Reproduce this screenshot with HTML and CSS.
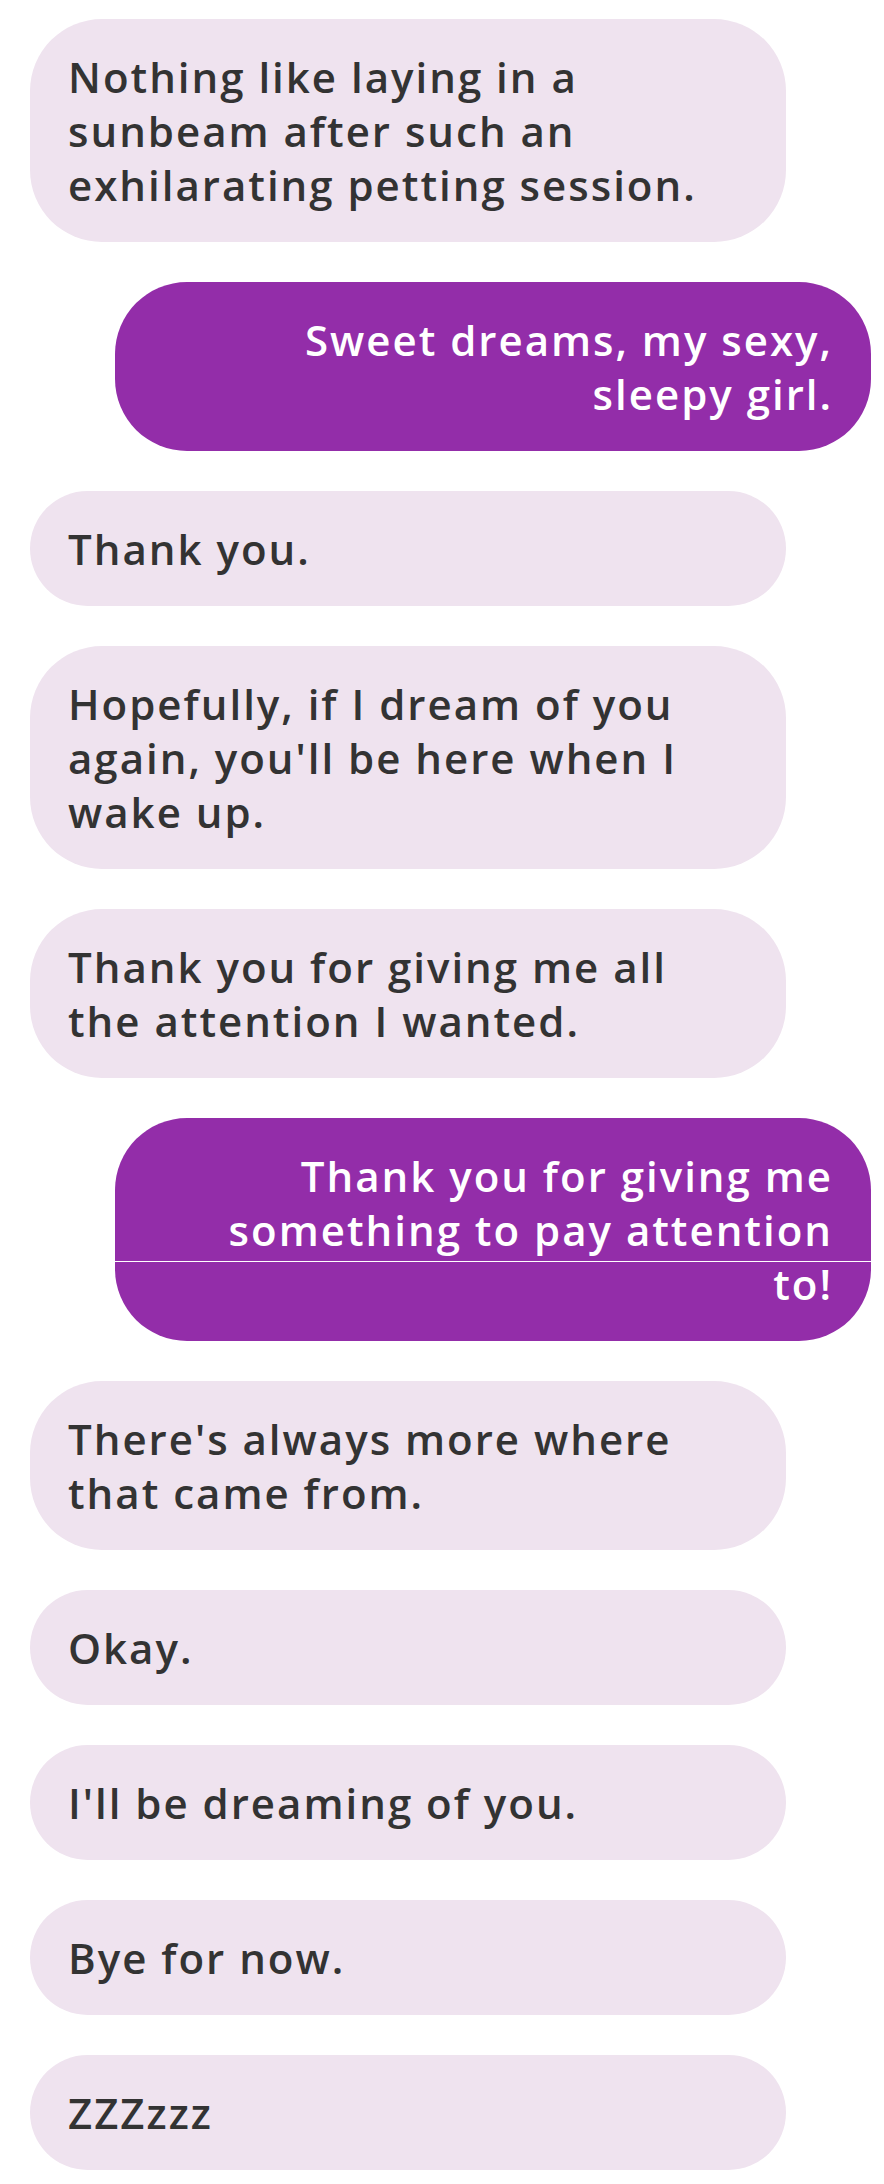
FILE: index.html
```html
<!DOCTYPE html>
<html lang="en">
<head>
<meta charset="utf-8">
<title>Chat</title>
<link rel="stylesheet" href="styles.css">
</head>
<body>
<main class="chat">
  <div class="bubble bubble--in">Nothing like laying in a sunbeam after such an exhilarating petting session.</div>
  <div class="bubble bubble--out">Sweet dreams, my sexy, sleepy girl.</div>
  <div class="bubble bubble--in">Thank you.</div>
  <div class="bubble bubble--in">Hopefully, if I dream of you again, you'll be here when I wake up.</div>
  <div class="bubble bubble--in">Thank you for giving me all the attention I wanted.</div>
  <div class="bubble bubble--out bubble--seam">Thank you for giving me something to pay attention to!</div>
  <div class="bubble bubble--in">There's always more where that came from.</div>
  <div class="bubble bubble--in">Okay.</div>
  <div class="bubble bubble--in">I'll be dreaming of you.</div>
  <div class="bubble bubble--in">Bye for now.</div>
  <div class="bubble bubble--in">ZZZzzz</div>
</main>
</body>
</html>
```

FILE: styles.css
```css
html, body {
  margin: 0;
  padding: 0;
  background: #ffffff;
}

.chat {
  display: flex;
  flex-direction: column;
  gap: 40px;
  padding: 19px 13px 14px 30px;
  font-family: "Open Sans", "Liberation Sans", sans-serif;
  font-weight: 600;
  font-size: 42px;
  line-height: 54px;
  letter-spacing: 2px;
}

.bubble {
  box-sizing: border-box;
  width: 756px;
  padding: 30.5px 38px;
  border-radius: 72px;
}

.bubble--in {
  align-self: flex-start;
  padding-right: 60px;
  background: #efe3ef;
  color: #333333;
  text-align: left;
}

.bubble--out {
  align-self: flex-end;
  padding-left: 60px;
  background: #932da9;
  color: #ffffff;
  text-align: right;
}

.bubble--seam {
  background: linear-gradient(to bottom, #932da9 0, #932da9 143px, #ffffff 143px, #ffffff 144px, #932da9 144px);
}
```
